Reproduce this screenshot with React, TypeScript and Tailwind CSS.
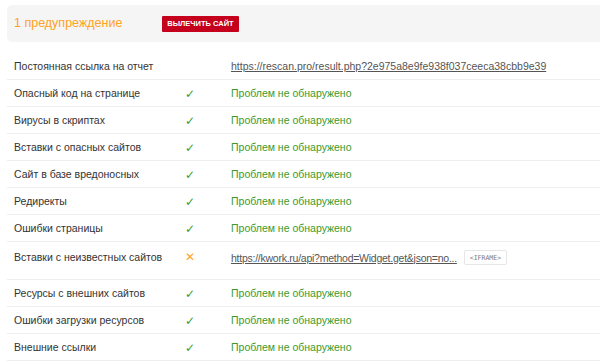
import React from "react";

type Row = {
  label: string;
  status: "ok" | "warn" | "none";
  value: React.ReactNode;
  tall?: boolean;
};

const ok = <span className="text-[#3a9b2c]">Проблем не обнаружено</span>;

const rows: Row[] = [
  {
    label: "Постоянная ссылка на отчет",
    status: "none",
    value: (
      <a className="text-[#555] underline" href="#">
        https://rescan.pro/result.php?2e975a8e9fe938f037ceeca38cbb9e39
      </a>
    ),
  },
  { label: "Опасный код на странице", status: "ok", value: ok },
  { label: "Вирусы в скриптах", status: "ok", value: ok },
  { label: "Вставки с опасных сайтов", status: "ok", value: ok },
  { label: "Сайт в базе вредоносных", status: "ok", value: ok },
  { label: "Редиректы", status: "ok", value: ok },
  { label: "Ошибки страницы", status: "ok", value: ok },
  {
    label: "Вставки с неизвестных сайтов",
    status: "warn",
    tall: true,
    value: (
      <span className="flex items-center">
        <a className="tracking-[-0.25px] text-[#555] underline" href="#">
          https://kwork.ru/api?method=Widget.get&amp;json=no...
        </a>
        <span className="ml-[7px] flex h-[15px] w-[43px] items-center justify-center rounded-[2px] border border-[#e6e6e6] font-['DejaVu_Sans_Mono',monospace] text-[6.5px] text-[#777]">
          &lt;IFRAME&gt;
        </span>
      </span>
    ),
  },
  { label: "Ресурсы с внешних сайтов", status: "ok", value: ok },
  { label: "Ошибки загрузки ресурсов", status: "ok", value: ok },
  { label: "Внешние ссылки", status: "ok", value: ok },
];

export default function App() {
  return (
    <div className="h-[363px] w-[600px] overflow-hidden bg-white font-['Liberation_Sans',Arial,sans-serif] text-[10.5px] text-[#333]">
      <div className="ml-[7px] mt-[5px] flex h-[37px] items-center rounded-l-[5px] bg-[#f5f5f5] pl-[7px]">
        <span className="w-[148px] text-[12.5px] text-[#ffa21f]">1 предупреждение</span>
        <span className="flex h-[16px] w-[77px] items-center justify-center rounded-[1px] bg-[#c5001c] text-[7.5px] font-bold text-white">
          ВЫЛЕЧИТЬ САЙТ
        </span>
      </div>
      <div className="ml-[7px] mt-[11px]">
        {rows.map((r, i) => (
          <div
            key={i}
            className={
              "grid grid-cols-[171px_46px_1fr] border-b border-[#efefef] pl-[7px] " +
              (r.tall ? "h-[38px] items-start pt-[8px]" : "h-[27px] items-center pt-[1px]")
            }
          >
            <span className={r.tall ? "leading-[14px]" : ""}>{r.label}</span>
            <span className="font-['DejaVu_Sans',sans-serif] text-[12px] leading-[14px]">
              {r.status === "ok" && <span className="text-[#3a9b2c]">✓</span>}
              {r.status === "warn" && <span className="text-[#ffa21f]">✕</span>}
            </span>
            <span className={r.tall ? "leading-[14px]" : ""}>{r.value}</span>
          </div>
        ))}
      </div>
    </div>
  );
}
